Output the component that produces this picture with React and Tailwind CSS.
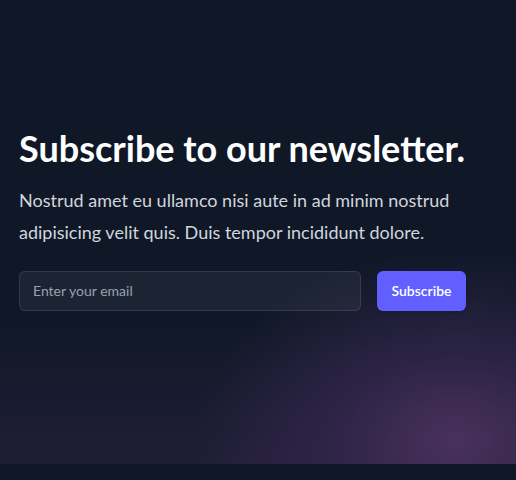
export default function App() {
  return (
    <div className="bg-gray-900 min-h-[480px] font-['Lato',sans-serif]">
      <section className="relative isolate overflow-hidden bg-gray-900 px-[19px] pt-32 pb-[153px]">
        <div className="max-w-[447px]">
          <h2 className="text-4xl font-bold text-white">Subscribe to our newsletter.</h2>
          <p className="mt-4 text-lg leading-8 text-gray-300">
            Nostrud amet eu ullamco nisi aute in ad minim nostrud adipisicing velit quis. Duis tempor incididunt dolore.
          </p>
          <div className="mt-[23px] flex gap-x-4">
            <input
              type="email"
              placeholder="Enter your email"
              className="min-w-0 flex-auto rounded-md bg-white/5 px-3.5 py-2 text-sm leading-6 text-white ring-1 ring-inset ring-white/10 placeholder:text-gray-400 outline-none"
            />
            <button type="button" className="flex w-[89px] flex-none justify-center rounded-md bg-indigo-500 py-2.5 text-sm font-semibold text-white shadow-sm">
              Subscribe
            </button>
          </div>
        </div>
        {/* soft purple glow behind the content */}
        <div className="pointer-events-none absolute inset-0 -z-10 bg-[linear-gradient(to_bottom,transparent_70%,rgba(60,40,80,0.35)_100%)]" />
        <div className="pointer-events-none absolute inset-0 -z-10 bg-[radial-gradient(ellipse_260px_190px_at_455px_440px,rgba(75,50,95,0.95),rgba(60,42,85,0.6)_45%,transparent_100%)]" />
      </section>
    </div>
  );
}
